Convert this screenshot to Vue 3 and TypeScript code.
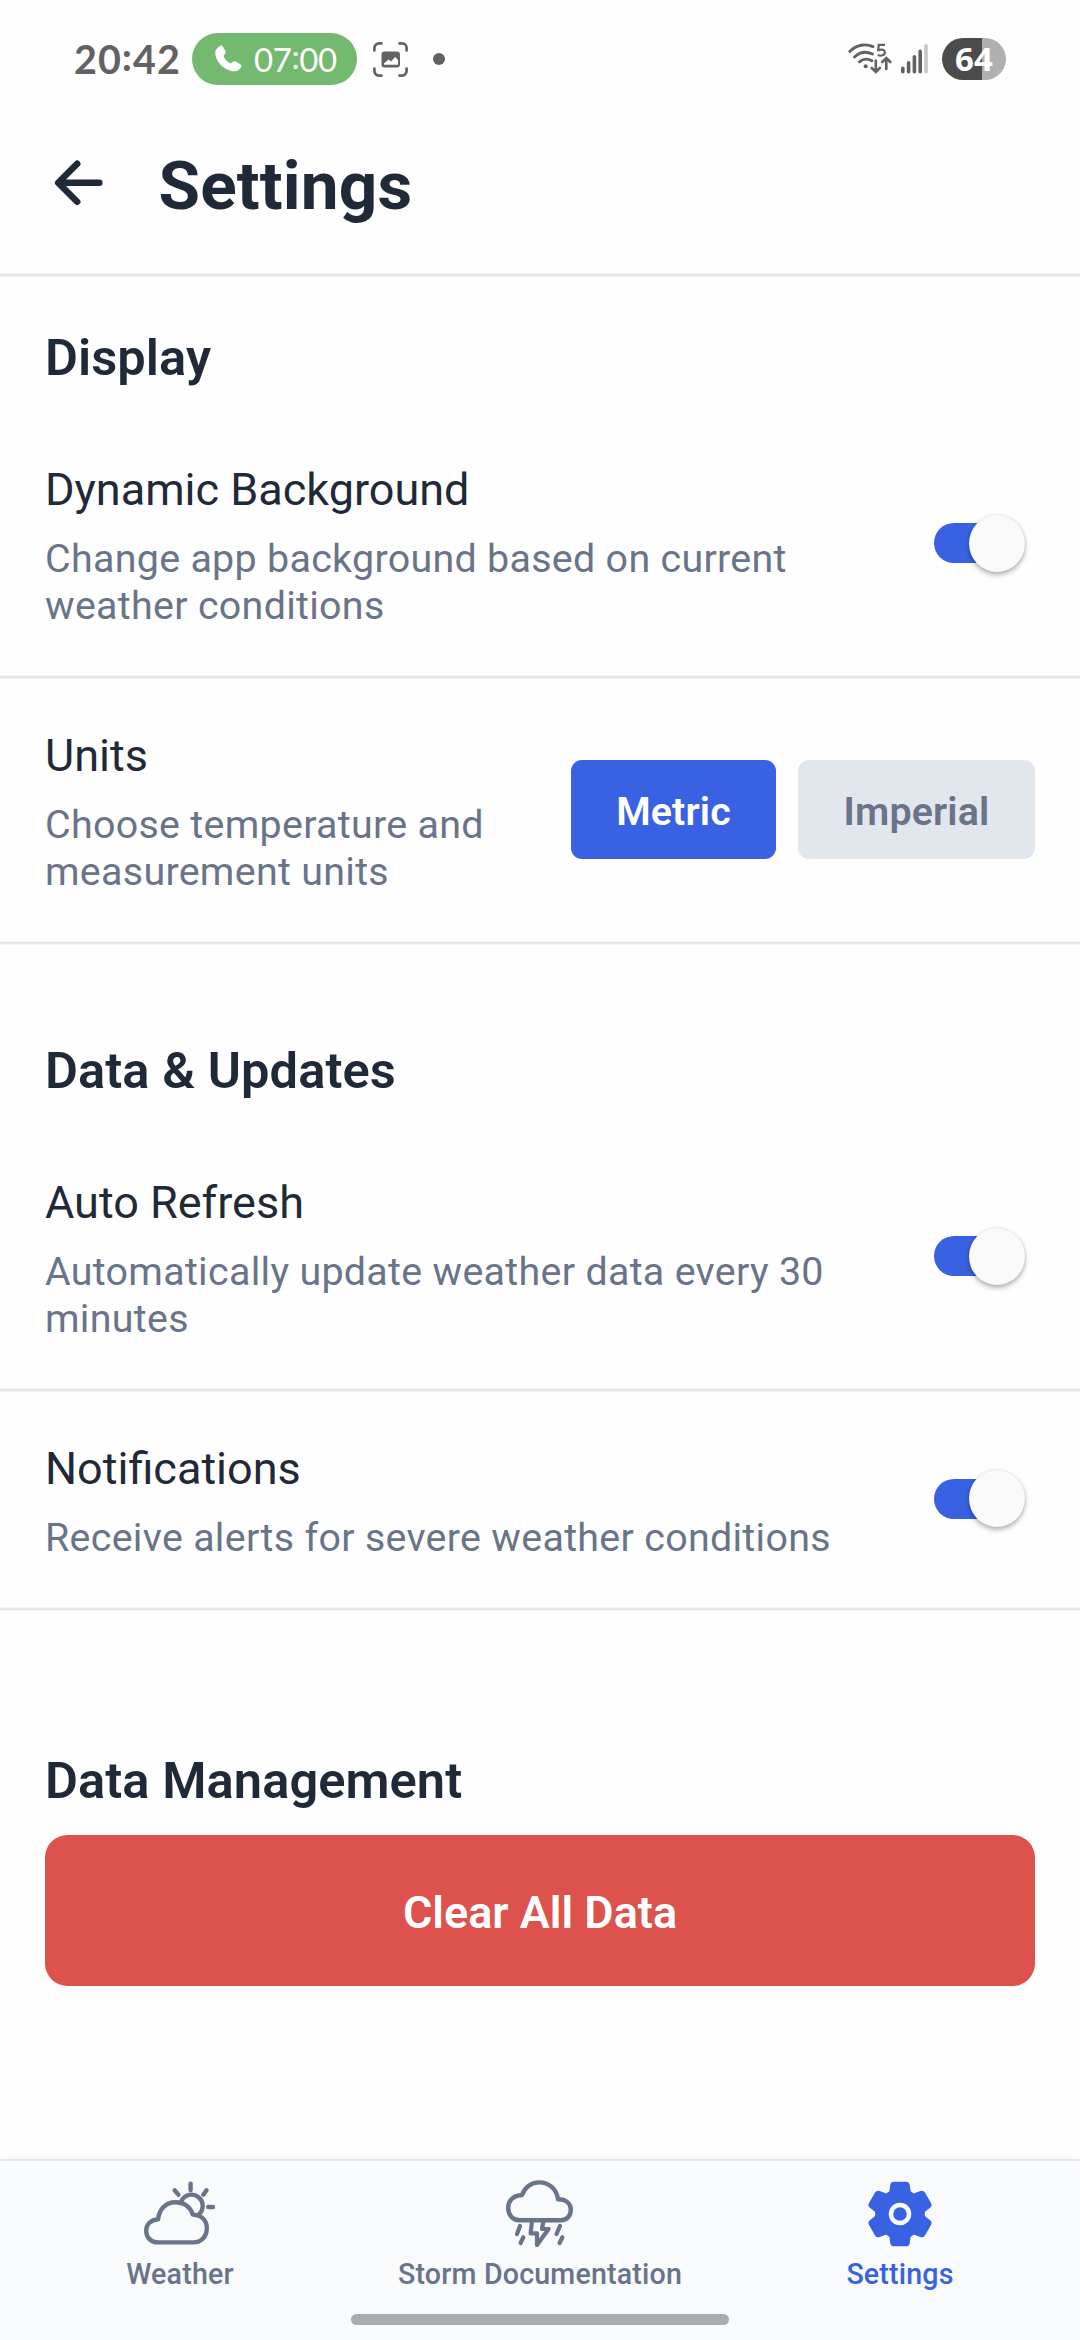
<script setup lang="ts">
import { ref } from 'vue'

type Units = 'metric' | 'imperial'

const dynamicBackground = ref(true)
const autoRefresh = ref(true)
const notifications = ref(true)
const units = ref<Units>('metric')
const batteryLevel = 64
</script>

<template>
  <div class="screen">
    <div class="status">
      <span class="clock">20<span class="clock-colon">:</span>42</span>
      <span class="call">
        <svg class="call-icon" viewBox="0 0 28 28">
          <path
            d="M5.2 1.2C6.6 0 8.2.3 9.1 1.9l2.2 3.9c.7 1.3.4 2.6-.6 3.7l-1.2 1.3c1 3.5 3.9 6.5 7.4 7.7l1.500-1.300c1.100-1 2.400-1.200 3.700-.5l3.900 2.200c1.600.9 1.900 2.400.8 3.800-2.200 2.900-4.900 4.100-8.300 3.500C9.300 24.500 2.200 17 1.300 9 .9 5.700 2.400 3.300 5.200 1.200z"
            fill="#fff"
          />
        </svg>
        <span class="call-time">07<span class="call-colon">:</span>00</span>
      </span>
      <svg class="capture" viewBox="0 0 35 35" fill="none" stroke="#626262" stroke-width="2.700" stroke-linecap="round">
        <path d="M1.400 8.500V6a4.600 4.600 0 0 1 4.600-4.600h2.500M26.500 1.400H29A4.600 4.600 0 0 1 33.600 6v2.500M33.600 26.500V29a4.600 4.600 0 0 1-4.600 4.600h-2.500M8.500 33.600H6A4.600 4.600 0 0 1 1.400 29v-2.500" />
        <rect x="8.500" y="9.500" width="18.500" height="16" rx="3.200" fill="#626262" stroke="none" />
        <path d="M11 21.500l4.500-4 2.500 2 4.200-4.500 2.800 3v4.700H11z" fill="#fefefe" stroke="none" />
      </svg>
      <span class="dot"></span>
      <span class="status-gap"></span>
      <svg class="wifi" viewBox="0 0 44 34" fill="none" stroke="#626262" stroke-width="2.900" stroke-linecap="round">
        <path d="M1.800 9.500C8.500 2.700 17.500 1.200 25 4.600M6.500 15c5-4.800 11.500-5.900 18-3M11.500 19.800c3.600-3 8.100-3.400 12.300-1" />
        <circle cx="17.600" cy="24.300" r="2" fill="#626262" stroke="none" />
        <path d="M27.800 18.500v10.500M23.800 26l4 4 4-4M38.300 27V17M34.300 20l4-4 4 4" stroke-width="2.600" />
        <path d="M37 2.800h-6.300l-.5 5.300c3.800-1.300 6.700-.2 6.700 2.300 0 2.900-3.700 3.900-7.200 2.500" stroke-width="2.200" stroke-linecap="butt" />
      </svg>
      <svg class="signal" viewBox="0 0 28 30">
        <rect x="0" y="22.500" width="3.600" height="7" rx="1.800" fill="#626262" />
        <rect x="5.800" y="17" width="3.600" height="12.500" rx="1.800" fill="#626262" />
        <rect x="11.600" y="11" width="3.600" height="18.500" rx="1.800" fill="#626262" />
        <rect x="17.400" y="5.500" width="3.600" height="24" rx="1.800" fill="#626262" />
        <rect x="23.200" y="0" width="3.600" height="29.500" rx="1.800" fill="#c6c6c6" />
      </svg>
      <span
        class="battery"
        :style="{ background: `linear-gradient(90deg, #4b4b4b ${batteryLevel - 1}%, #b0b0b0 ${batteryLevel - 1}%)` }"
      >{{ batteryLevel }}</span>
    </div>

    <header class="header">
      <svg class="back" viewBox="0 0 512 512" fill="none" stroke="#1f2937" stroke-width="50" stroke-linecap="round" stroke-linejoin="round">
        <path d="M244 400L100 256l144-144M120 256h292" />
      </svg>
      <h1>Settings</h1>
    </header>
    <div class="divider top"></div>

    <main>
      <h2>Display</h2>
      <div class="row">
        <div class="copy">
          <div class="label">Dynamic Background</div>
          <div class="desc">Change app background based on current weather conditions</div>
        </div>
        <button class="switch" :class="{ on: dynamicBackground }" @click="dynamicBackground = !dynamicBackground">
          <span class="thumb"></span>
        </button>
      </div>
      <div class="divider"></div>
      <div class="row">
        <div class="copy">
          <div class="label">Units</div>
          <div class="desc">Choose temperature and measurement units</div>
        </div>
        <div class="units">
          <button class="unit metric" :class="{ active: units === 'metric' }" @click="units = 'metric'">Metric</button>
          <button class="unit imperial" :class="{ active: units === 'imperial' }" @click="units = 'imperial'">Imperial</button>
        </div>
      </div>
      <div class="divider"></div>

      <h2 class="second">Data &amp; Updates</h2>
      <div class="row">
        <div class="copy">
          <div class="label">Auto Refresh</div>
          <div class="desc">Automatically update weather data every 30 minutes</div>
        </div>
        <button class="switch" :class="{ on: autoRefresh }" @click="autoRefresh = !autoRefresh">
          <span class="thumb"></span>
        </button>
      </div>
      <div class="divider"></div>
      <div class="row">
        <div class="copy">
          <div class="label">Notifications</div>
          <div class="desc">Receive alerts for severe weather conditions</div>
        </div>
        <button class="switch" :class="{ on: notifications }" @click="notifications = !notifications">
          <span class="thumb"></span>
        </button>
      </div>
      <div class="divider"></div>

      <h2 class="third">Data Management</h2>
      <button class="clear">Clear All Data</button>
    </main>

    <nav class="tabs">
      <div class="tab-row">
        <a class="tab">
          <svg viewBox="0 0 72 72" fill="none" stroke="currentColor" stroke-width="4.400" stroke-linecap="round" stroke-linejoin="round">
            <path d="M14 64.400c-7 0-11.800-4.800-11.800-11.600 0-6.500 4.800-10.900 11.900-11.500 1-10.500 8-17 17.400-17 8.600 0 14.900 4.600 17.300 12.300 8.600.7 14 5.700 14 13.600 0 8.400-5.600 14.200-13.800 14.200z" />
            <path d="M37.500 22.800A11.200 11.200 0 1 1 54.500 36.600M46.600 5.700V12M30.700 12.300l3.700 4.400M62.500 12.300l-3.200 4.400M64.200 29H69" />
          </svg>
          <span>Weather</span>
        </a>
        <a class="tab">
          <svg viewBox="0 0 72 72" fill="none" stroke="currentColor" stroke-width="4.400" stroke-linecap="round" stroke-linejoin="round">
            <path d="M15.600 42.200C8.500 42.200 4.200 37 4.200 29.800 4.200 23 9 17.300 18 17 20.500 9.500 27 4.400 35 4.400c10 0 17.500 6.600 19 16.800 8 0 12.800 4.300 12.800 10.500 0 6.500-4.300 10.500-9.500 10.500z" />
            <path d="M28 43l-1.400 12.400H33V67l11.600-16H38l1.500-8M16 48l-3 8M19.300 59.300l-2.700 5.700M56 48l-3.500 8M58.400 59.300L55.600 65" stroke-width="4.200" />
          </svg>
          <span>Storm Documentation</span>
        </a>
        <a class="tab current">
          <svg viewBox="0 0 512 512" fill="currentColor">
            <circle cx="256" cy="256" r="48" />
            <path d="M470.390 300l-.47-.38-31.560-24.750a16.110 16.110 0 0 1-6.100-13.330v-11.560a16 16 0 0 1 6.110-13.220L469.920 212l.47-.38a26.680 26.680 0 0 0 5.900-34.060l-42.710-73.900a1.590 1.590 0 0 1-.13-.22A26.860 26.860 0 0 0 401 92.140l-.35.13-37.100 14.930a15.940 15.940 0 0 1-14.470-1.290q-4.920-3.100-10-5.860a15.940 15.940 0 0 1-8.190-11.820l-5.590-39.590-.12-.72A27.220 27.220 0 0 0 298.760 26h-85.520a26.920 26.920 0 0 0-26.450 22.390l-.09.56-5.570 39.670a16 16 0 0 1-8.130 11.820 175.210 175.210 0 0 0-10 5.820 15.920 15.920 0 0 1-14.430 1.270l-37.130-15-.35-.14a26.870 26.870 0 0 0-32.480 11.340l-.13.22-42.770 73.950a26.710 26.710 0 0 0 5.900 34.100l.47.38 31.560 24.750a16.110 16.110 0 0 1 6.100 13.330v11.560a16 16 0 0 1-6.110 13.220L42.080 300l-.47.38a26.680 26.680 0 0 0-5.900 34.060l42.710 73.900a1.590 1.590 0 0 1 .13.22 26.860 26.860 0 0 0 32.450 11.300l.35-.13 37.070-14.930a15.940 15.940 0 0 1 14.470 1.290q4.920 3.110 10 5.860a15.940 15.940 0 0 1 8.190 11.820l5.560 39.590.12.72A27.220 27.220 0 0 0 213.240 486h85.520a26.920 26.920 0 0 0 26.450-22.390l.09-.56 5.570-39.670a16 16 0 0 1 8.180-11.820c3.420-1.840 6.760-3.790 10-5.820a15.920 15.920 0 0 1 14.430-1.270l37.130 14.950.35.14a26.850 26.850 0 0 0 32.480-11.340 2.530 2.530 0 0 1 .13-.22l42.710-73.890a26.700 26.700 0 0 0-5.890-34.110zm-134.480-40.240a80 80 0 1 1-83.660-83.670 80.210 80.210 0 0 1 83.660 83.670z" />
          </svg>
          <span>Settings</span>
        </a>
      </div>
      <div class="home-bar"></div>
    </nav>
  </div>
</template>

<style>
body {
  background: #fefefe;
}
</style>

<style scoped>
.screen {
  width: 1080px;
  height: 2340px;
  display: flex;
  flex-direction: column;
  background: #fefefe;
  color: #1f2937;
  font-family: Roboto, sans-serif;
  overflow: hidden;
}
button {
  border: 0;
  padding: 0;
  margin: 0;
  font-family: inherit;
}
h1,
h2 {
  margin: 0;
}

/* status bar */
.status {
  height: 118px;
  flex: none;
  box-sizing: border-box;
  padding: 0 74px;
  display: flex;
  align-items: center;
  color: #626262;
}
.clock {
  width: 118px;
  font: 700 39.500px/50px Lato, sans-serif;
  letter-spacing: 1px;
  white-space: nowrap;
}
.clock-colon,
.call-colon {
  vertical-align: 3px;
  line-height: 1;
}
.call {
  width: 165px;
  height: 52px;
  box-sizing: border-box;
  padding-left: 22px;
  border-radius: 26px;
  background: #73b96f;
  display: flex;
  align-items: center;
}
.call-icon {
  width: 28px;
  height: 28px;
  margin-right: 12px;
}
.call-time {
  color: #fff;
  font: 400 33px/40px Lato, sans-serif;
  letter-spacing: -0.400px;
  white-space: nowrap;
}
.capture {
  width: 35px;
  height: 35px;
  margin-left: 16px;
}
.dot {
  width: 12px;
  height: 12px;
  margin-left: 25px;
  border-radius: 50%;
  background: #626262;
}
.status-gap {
  flex: 1;
}
.wifi {
  width: 44px;
  height: 34px;
  margin-right: 9px;
}
.signal {
  width: 28px;
  height: 30px;
  margin-right: 13px;
}
.battery {
  width: 64px;
  height: 42px;
  border-radius: 21px;
  text-align: center;
  color: #fff;
  font: 700 33px/41px 'Noto Sans', sans-serif;
}

/* page header */
.header {
  height: 155px;
  flex: none;
  box-sizing: border-box;
  padding: 28px 45px 0;
  display: flex;
  align-items: flex-start;
}
.back {
  width: 67.500px;
  height: 67.500px;
  margin: 3px 46px 0 0;
}
h1 {
  font-size: 67.500px;
  line-height: 80px;
  font-weight: 700;
  letter-spacing: 0.150px;
}
.divider {
  height: 2px;
  flex: none;
  background: #e4e6ed;
  border-top: 1px solid #f1f3f6;
  border-bottom: 1px solid #f1f3f6;
}
.divider.top {
  background: #e2e6e9;
}

/* settings list */
main {
  flex: 1;
}
h2 {
  margin: 51px 45px 25px;
  font-size: 50.600px;
  line-height: 60px;
  font-weight: 600;
  letter-spacing: 0.070px;
}
h2.second {
  margin-top: 96px;
}
h2.third {
  margin: 140px 45px 24px;
}
.row {
  display: flex;
  align-items: center;
  padding: 0 45px;
}
.copy {
  flex: 1;
  padding: 50px 45px 46px 0;
}
.label {
  font-size: 45px;
  line-height: 54px;
}
.desc {
  margin-top: 18px;
  font-size: 39.400px;
  line-height: 47px;
  letter-spacing: 0.300px;
  color: #697489;
}
.switch {
  width: 85px;
  height: 40px;
  margin: 0 16px 2px 0;
  flex: none;
  border-radius: 20px;
  background: #c4cad4;
  display: flex;
  align-items: center;
}
.switch.on {
  background: #3862e1;
  justify-content: flex-end;
}
.thumb {
  width: 56px;
  height: 57px;
  margin-right: -6px;
  flex: none;
  border-radius: 50%;
  background: #fafafa;
  box-shadow: 0 3px 5px rgba(0, 0, 0, 0.28), 0 0 3px rgba(0, 0, 0, 0.12);
}
.units {
  display: flex;
  gap: 22px;
  margin-bottom: 1px;
}
.unit {
  height: 99px;
  padding-top: 3px;
  border-radius: 11px;
  background: #e2e7ee;
  color: #697489;
  font-size: 39.400px;
  font-weight: 600;
  letter-spacing: 0.150px;
}
.unit.metric {
  width: 205px;
}
.unit.imperial {
  width: 237px;
}
.unit.active {
  background: #3862e1;
  color: #fff;
}
.clear {
  display: block;
  width: 990px;
  height: 151px;
  margin: 0 45px;
  padding-top: 4px;
  border-radius: 22.500px;
  background: #dd524c;
  color: #fff;
  font-size: 45px;
  font-weight: 600;
}

/* bottom tabs */
.tabs {
  height: 181px;
  flex: none;
  box-sizing: border-box;
  border-top: 2px solid #e8e8e8;
  background: #f8fafc;
  box-shadow: 0 -1px 6px rgba(0, 0, 0, 0.04);
}
.tab-row {
  display: flex;
  padding-top: 17px;
}
.tab {
  flex: 1 1 0;
  display: flex;
  flex-direction: column;
  align-items: center;
  color: #697489;
}
.tab svg {
  width: 72px;
  height: 72px;
}
.tab span {
  margin-top: 7px;
  font-size: 28.600px;
  line-height: 34px;
  font-weight: 500;
  letter-spacing: 0.180px;
  white-space: nowrap;
}
.tab.current {
  color: #3862e1;
}
.home-bar {
  width: 378px;
  height: 11px;
  margin: 23px auto 0;
  border-radius: 6px;
  background: #a9abad;
}
</style>
